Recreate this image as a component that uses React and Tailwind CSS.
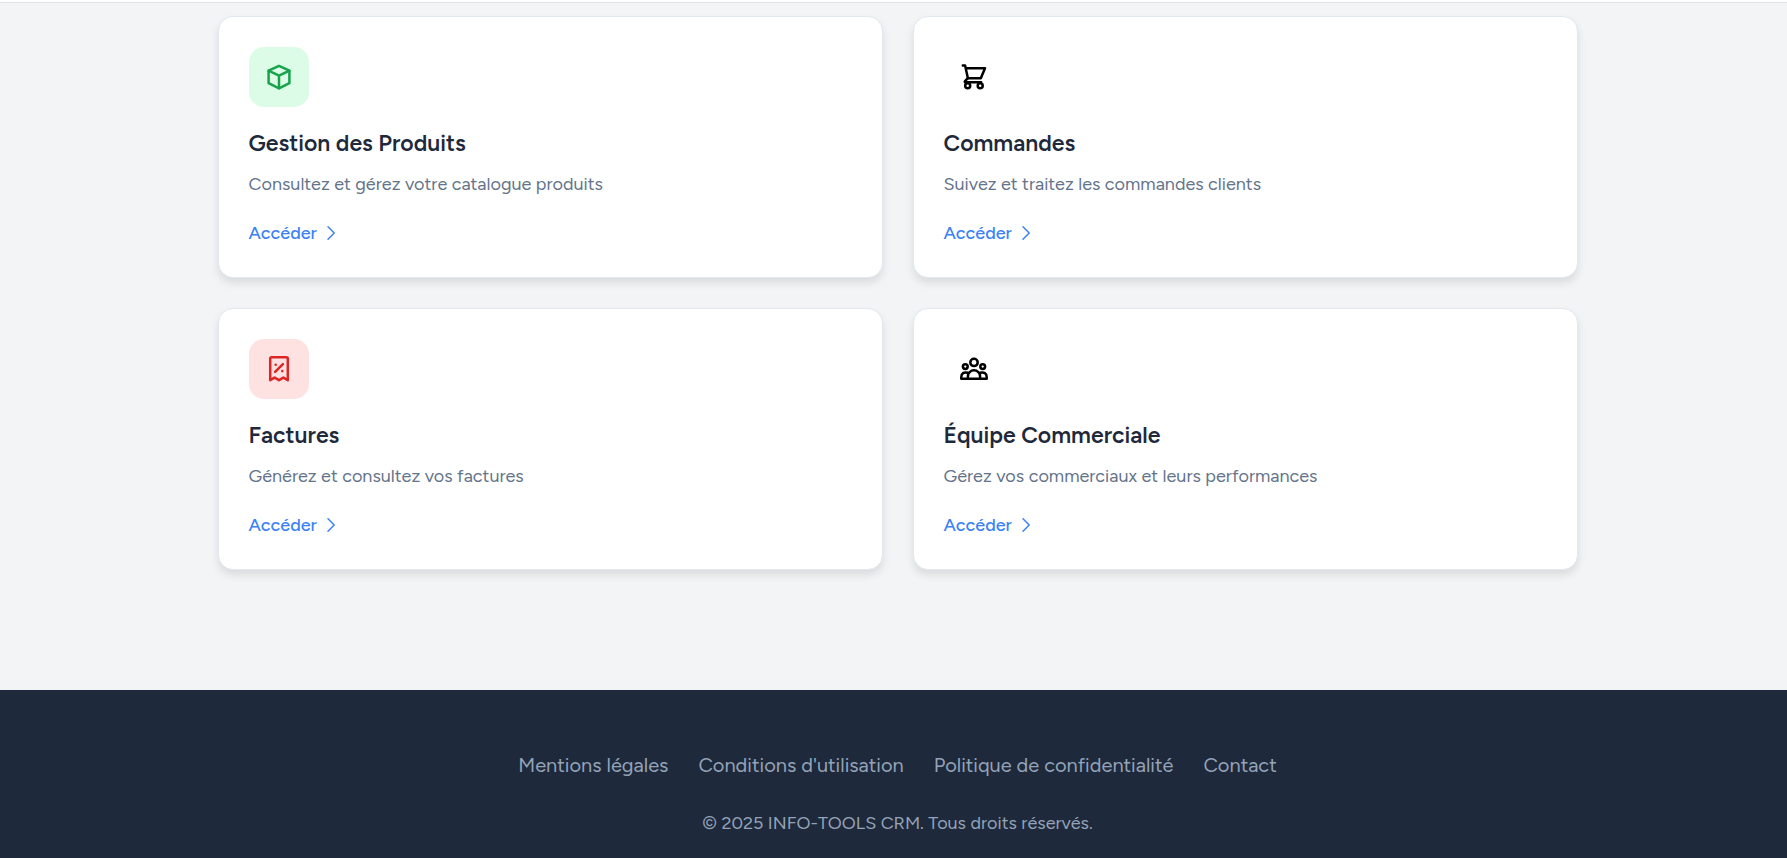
function Icon({ children }) {
  return (
    <svg
      viewBox="0 0 30 30"
      className="size-[30px]"
      fill="none"
      stroke="currentColor"
      strokeWidth="2.5"
      strokeLinecap="round"
      strokeLinejoin="round"
      aria-hidden="true"
    >
      {children}
    </svg>
  );
}

function CubeIcon() {
  return (
    <Icon>
      <path d="M15 3.9 4.6 8.7v12.5L15 26.3l10.4-5.1V8.7L15 3.9Z" />
      <path d="M4.6 8.7 15 13.7l10.4-5M15 13.7v12.6" />
    </Icon>
  );
}

function CartIcon() {
  return (
    <Icon>
      <path d="M3.8 3.6h2.3L8.9 16.2h12.9L26 6.2H6.7" />
      <path d="M8.9 16.2 6 19.2c-.5.5-.3 1.1.4 1.1h15.7" />
      <circle cx="8.7" cy="23.7" r="2.5" />
      <circle cx="21.2" cy="23.7" r="2.5" />
    </Icon>
  );
}

function ReceiptIcon() {
  return (
    <Icon>
      <path d="M6.2 26.2V4.8c0-.9.6-1.5 1.5-1.5h14.6c.9 0 1.5.6 1.5 1.5v21.4l-4.4-2.6-4.4 2.6-4.4-2.6-4.4 2.6Z" />
      <path d="m11.1 17.9 7.8-7.8" />
      <circle cx="11.7" cy="10.7" r="1.3" fill="currentColor" stroke="none" />
      <circle cx="18.3" cy="17.1" r="1.3" fill="currentColor" stroke="none" />
    </Icon>
  );
}

function TeamIcon() {
  return (
    <Icon>
      <circle cx="15" cy="8.4" r="3.7" />
      <circle cx="6.3" cy="12.6" r="2.4" />
      <circle cx="23.7" cy="12.6" r="2.4" />
      <path d="M8.9 24.8v-2.4a6.1 6.1 0 0 1 12.2 0v2.4" />
      <path d="M8.8 18.8C5 17.7 2.3 19.4 2.3 23v1.8h25.4V23c0-3.6-2.7-5.3-6.5-4.2" />
    </Icon>
  );
}

function ChevronIcon() {
  return (
    <svg
      viewBox="0 0 18 18"
      className="size-[18px]"
      fill="none"
      stroke="currentColor"
      strokeWidth="1.5"
      strokeLinecap="round"
      strokeLinejoin="round"
      aria-hidden="true"
    >
      <path d="m5 2.8 6.2 6.2L5 15.2" />
    </svg>
  );
}

const modules = [
  {
    title: "Gestion des Produits",
    text: "Consultez et gérez votre catalogue produits",
    icon: CubeIcon,
    tone: "bg-[#dcfce7] text-[#16a34a]",
  },
  {
    title: "Commandes",
    text: "Suivez et traitez les commandes clients",
    icon: CartIcon,
    tone: "text-black",
  },
  {
    title: "Factures",
    text: "Générez et consultez vos factures",
    icon: ReceiptIcon,
    tone: "bg-[#fee2e2] text-[#dc2626]",
  },
  {
    title: "Équipe Commerciale",
    text: "Gérez vos commerciaux et leurs performances",
    icon: TeamIcon,
    tone: "text-black",
  },
];

const footerLinks = [
  "Mentions légales",
  "Conditions d'utilisation",
  "Politique de confidentialité",
  "Contact",
];

function ModuleCard({ title, text, icon: Glyph, tone }) {
  return (
    <article className="rounded-[15px] border border-[#e2e8f0] bg-white p-[30px] shadow-[0_5px_8px_rgba(0,0,0,0.1)]">
      <div className={`mb-5 flex size-[60px] items-center justify-center rounded-[15px] ${tone}`}>
        <Glyph />
      </div>
      <h3 className="mb-3 text-[23px] leading-8 font-semibold text-[#1e293b]">{title}</h3>
      <p className="mb-[22px] text-[18px] leading-[26px] text-[#64748b]">{text}</p>
      <a href="#" className="flex w-fit items-center gap-1.5 text-[18px] leading-7 font-medium text-[#3b82f6]">
        Accéder
        <ChevronIcon />
      </a>
    </article>
  );
}

export default function App() {
  return (
    <div className="flex min-h-screen flex-col bg-[#f3f4f6] font-['Figtree','Lato',sans-serif]">
      <header className="h-[3px] border-b border-[#dee2e6] bg-white" />
      <main className="mb-[120px] pt-[13px] pl-2">
        <div className="mx-auto grid max-w-[1360px] grid-cols-1 gap-[30px] md:grid-cols-2">
          {modules.map((m) => (
            <ModuleCard key={m.title} {...m} />
          ))}
        </div>
      </main>
      <footer className="grow bg-[#1e293b] pt-[60px] pb-5 pl-2 text-center text-[#94a3b8]">
        <nav className="mb-7 flex flex-wrap justify-center gap-[30px] text-[20px] leading-[30px]">
          {footerLinks.map((label) => (
            <a key={label} href="#">
              {label}
            </a>
          ))}
        </nav>
        <p className="text-[18px] leading-[30px]">© 2025 INFO-TOOLS CRM. Tous droits réservés.</p>
      </footer>
    </div>
  );
}
